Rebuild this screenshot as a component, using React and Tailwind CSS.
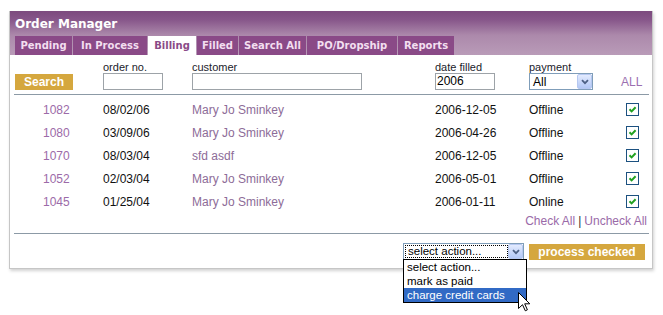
import React from 'react';

const tabs = [
  { label: 'Pending', w: 'w-[57px]' },
  { label: 'In Process', w: 'w-[74px]' },
  { label: 'Billing', w: 'w-[48px]', active: true },
  { label: 'Filled', w: 'w-[41px]' },
  { label: 'Search All', w: 'w-[67px]' },
  { label: 'PO/Dropship', w: 'w-[90px]' },
  { label: 'Reports', w: 'w-[56px]' },
];

const orders = [
  { id: '1082', date: '08/02/06', customer: 'Mary Jo Sminkey', filled: '2006-12-05', payment: 'Offline' },
  { id: '1080', date: '03/09/06', customer: 'Mary Jo Sminkey', filled: '2006-04-26', payment: 'Offline' },
  { id: '1070', date: '08/03/04', customer: 'sfd asdf', filled: '2006-12-05', payment: 'Offline' },
  { id: '1052', date: '02/03/04', customer: 'Mary Jo Sminkey', filled: '2006-05-01', payment: 'Offline' },
  { id: '1045', date: '01/25/04', customer: 'Mary Jo Sminkey', filled: '2006-01-11', payment: 'Online' },
];

// XP style combo arrow
const DropButton = () => (
  <span className="w-[15px] h-[15px] rounded-[2px] bg-linear-to-b from-[#e3ebfe] to-[#b3c8f6] border border-[#b6c8f1] flex items-center justify-center">
    <svg width="8" height="6" viewBox="0 0 8 6">
      <path d="M1 1.2 L4 4.2 L7 1.2" stroke="#4d6185" strokeWidth="1.8" fill="none" />
    </svg>
  </span>
);

const CheckBox = () => (
  <span className="w-[13px] h-[13px] border border-[#1c5180] bg-white flex items-center justify-center">
    <svg width="9" height="9" viewBox="0 0 9 9">
      <path d="M1.5 4.3 L3.6 6.4 L7.6 2.2" stroke="#21a121" strokeWidth="2" fill="none" />
    </svg>
  </span>
);

const Label = ({ children }) => (
  <div className="h-[12px] leading-[12px] text-[11px] text-[#1b1b2b]">{children}</div>
);

export default function App() {
  return (
    <div className="w-[663px] h-[315px] bg-white relative font-['Liberation_Sans',Arial,sans-serif]">
      <div className="pt-[11px] pl-[9px]">
        <div className="w-[644px] border-x border-b border-[#c6c6c6] bg-white shadow-[1px_2px_3px_rgba(0,0,0,0.18)]">

          {/* Header + tabs */}
          <div className="pl-[5px] bg-[linear-gradient(to_bottom,#7c4a7e_0%,#87568a_20%,#ac89ab_55%,#b99bb8_100%)]">
            <div className="h-[25px] flex items-center text-white font-bold text-[12px] font-['DejaVu_Sans',Verdana,sans-serif]">
              Order Manager
            </div>
            <div className="flex h-[19px] gap-[1px]">
              {tabs.map((t) => (
                <div
                  key={t.label}
                  className={`${t.w} h-[19px] flex items-center justify-center text-[10px] font-bold font-['DejaVu_Sans',Verdana,sans-serif] ${t.active ? 'bg-white text-[#8a4a87]' : 'bg-[#8a4a87] text-[#f3dff0]'}`}
                >
                  {t.label}
                </div>
              ))}
            </div>
          </div>

          {/* Filters */}
          <div className="flex items-end pl-[5px] pt-[6px]">
            <div className="w-[88px]">
              <button className="block w-[58px] h-[16px] bg-[#d5a73e] text-white font-bold text-[12px] leading-[16px]">Search</button>
            </div>
            <div className="w-[89px]">
              <Label>order no.</Label>
              <div className="w-[60px] h-[17px] border border-[#9da3a8] bg-white" />
            </div>
            <div className="w-[243px]">
              <Label>customer</Label>
              <div className="w-[170px] h-[17px] border border-[#9da3a8] bg-white" />
            </div>
            <div className="w-[94px]">
              <Label>date filled</Label>
              <div className="w-[60px] h-[17px] border border-[#9da3a8] bg-white text-[12px] leading-[15px] pl-[1px] text-black">2006</div>
            </div>
            <div className="w-[92px]">
              <Label>payment</Label>
              <div className="w-[64px] h-[17px] border border-[#7f9db9] bg-white flex items-center justify-between pl-[3px]">
                <span className="text-[12px] text-black">All</span>
                <DropButton />
              </div>
            </div>
            <div className="text-[12px] text-[#9b6fb0] leading-[16px]">ALL</div>
          </div>

          <div className="h-[1px] bg-[#8c9aa6] ml-[4px] mr-[3px] mt-[4px]" />

          {/* Orders */}
          <div className="pt-[3px] text-[12px]">
            {orders.map((o) => (
              <div key={o.id} className="h-[23px] flex items-center pl-[33px]">
                <span className="w-[60px] text-[#9c6aa8]">{o.id}</span>
                <span className="w-[89px] text-[#111]">{o.date}</span>
                <span className="w-[243px] text-[#8d6c98]">{o.customer}</span>
                <span className="w-[94px] text-[#111]">{o.filled}</span>
                <span className="w-[97px] text-[#111]">{o.payment}</span>
                <CheckBox />
              </div>
            ))}
          </div>

          <div className="h-[16px] flex items-center justify-end pr-[5px] text-[12px]">
            <span className="text-[#9a6aa8]">Check All</span>
            <span className="text-[#333] px-[3px]">|</span>
            <span className="text-[#9a6aa8]">Uncheck All</span>
          </div>

          <div className="h-[1px] bg-[#8c9aa6] ml-[4px] mr-[3px] mt-[4px]" />

          {/* Actions */}
          <div className="flex justify-end items-start gap-[5px] pr-[7px] pt-[9px] pb-[8px]">
            <div className="relative w-[121px] h-[17px] border border-[#7f9db9] bg-white flex items-center">
              <span className="ml-[1px] w-[103px] h-[13px] border border-dotted border-black text-[11.5px] leading-[11px] pl-[2px] text-black">select action...</span>
              <span className="ml-auto"><DropButton /></span>

              <div className="absolute left-[-1px] top-[15px] w-[124px] border border-black bg-white text-[11.5px] z-10">
                <div className="h-[14px] leading-[14px] pl-[3px] text-black">select action...</div>
                <div className="h-[14px] leading-[14px] pl-[3px] text-black">mark as paid</div>
                <div className="h-[14px] leading-[14px] pl-[3px] bg-[#316ac5] text-white">charge credit cards</div>
                <svg className="absolute left-[114px] top-[32px]" width="13" height="20" viewBox="0 0 13 20">
                  <path d="M0.5 0.5 L0.5 16.5 L4.5 12.7 L7.3 18.8 L9.4 17.8 L6.7 11.8 L11.8 11.8 Z" fill="white" stroke="black" strokeWidth="1" />
                </svg>
              </div>
            </div>
            <button className="block w-[116px] h-[16px] mt-[1px] bg-[#d5a73e] text-white font-bold text-[12px] leading-[16px]">process checked</button>
          </div>

        </div>
      </div>
    </div>
  );
}
